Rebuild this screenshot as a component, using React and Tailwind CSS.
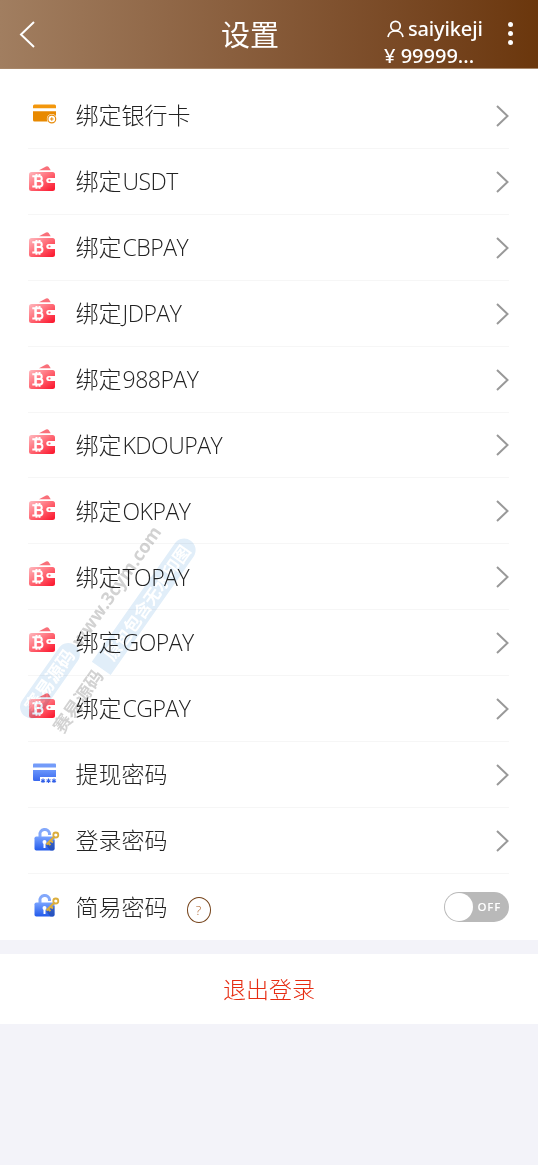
const FONT = 'font-["Open_Sans","Noto_Sans_CJK_SC",sans-serif]'

const items = [
  { label: "绑定银行卡", icon: "bank" },
  { label: "绑定", code: "USDT", icon: "wallet" },
  { label: "绑定", code: "CBPAY", icon: "wallet" },
  { label: "绑定", code: "JDPAY", icon: "wallet" },
  { label: "绑定", code: "988PAY", icon: "wallet" },
  { label: "绑定", code: "KDOUPAY", icon: "wallet" },
  { label: "绑定", code: "OKPAY", icon: "wallet" },
  { label: "绑定", code: "TOPAY", icon: "wallet" },
  { label: "绑定", code: "GOPAY", icon: "wallet" },
  { label: "绑定", code: "CGPAY", icon: "wallet" },
  { label: "提现密码", icon: "card" },
  { label: "登录密码", icon: "lock" },
  { label: "简易密码", icon: "lock", toggle: true },
]

function WalletIcon() {
  return (
    <svg width="28" height="28" viewBox="0 0 28 28" className="-mt-px -ml-1">
      <defs>
        <linearGradient id="wallet" x1="0" y1="0" x2="1" y2="1">
          <stop offset="0" stopColor="#ffb9bf" />
          <stop offset="0.5" stopColor="#ff6672" />
          <stop offset="1" stopColor="#fb1028" />
        </linearGradient>
      </defs>
      <path d="M11 5.200 18 1.500q1.600-.8 2.700.6l2 3.100z" fill="#f9707a" />
      <rect x="1" y="7" width="26" height="19" rx="2.500" fill="url(#wallet)" />
      <path d="M27 13h-6.200a2.500 2.500 0 0 0 0 5H27z" fill="#fff" />
      <circle cx="21.500" cy="15.500" r="1.100" fill="#ff5563" />
      <path d="M4.300 11.200h7a2.200 2.200 0 0 1 0 4.900H7.500h4.300a2.600 2.600 0 0 1 0 5.300H4.300M7.400 11v10.500M8.500 8.900V11m3-2.100V11M8.500 21.500v2.200m3-2.200v2.200" fill="none" stroke="#fff" strokeWidth="2" />
      <path d="M6.700 10.500h2v11.500h-2z" fill="#fff" />
    </svg>
  )
}

function BankIcon() {
  return (
    <svg width="26" height="22" viewBox="0 0 26 22" className="mt-px">
      <path d="M1 3q0-1.500 1.500-1.500h20Q24 1.500 24 3v2.300H1z" fill="#f3970c" />
      <path d="M1 8.300h23V18.500H2.500Q1 18.500 1 17z" fill="#e88900" />
      <circle cx="19.800" cy="16" r="5" fill="#fff" />
      <circle cx="19.800" cy="16" r="3.900" fill="none" stroke="#e88c0b" strokeWidth="1.200" />
      <path d="M18 16h3.600M19.800 14.200v3.600" stroke="#e88c0b" strokeWidth="1.100" />
    </svg>
  )
}

function CardIcon() {
  return (
    <svg width="26" height="24" viewBox="0 0 26 24" className="mt-[3px]">
      <defs>
        <linearGradient id="card" x1="0" y1="0" x2="0" y2="1">
          <stop offset="0" stopColor="#6995fb" />
          <stop offset="1" stopColor="#3a68ee" />
        </linearGradient>
      </defs>
      <path d="M1 2.500q0-1 1-1h21q1 0 1 1V5.500H1z" fill="#739bf9" />
      <path d="M1 8h23v7H8v4H2.500Q1 19 1 17.500z" fill="url(#card)" />
      <path d="M11 16.500v4.600m-2-3.500 4 2.400m0-2.400-4 2.400M16.500 16.500v4.600m-2-3.500 4 2.400m0-2.400-4 2.400M22 16.500v4.600m-2-3.500 4 2.400m0-2.400-4 2.400" stroke="#315fe8" strokeWidth="1.100" />
    </svg>
  )
}

function LockIcon() {
  return (
    <svg width="28" height="26" viewBox="0 0 28 26" className="mt-[3px]">
      <defs>
        <linearGradient id="lock" x1="0" y1="0" x2="0" y2="1">
          <stop offset="0" stopColor="#78a2ff" />
          <stop offset="1" stopColor="#225aeb" />
        </linearGradient>
      </defs>
      <path d="M8 11V8a4.800 4.800 0 0 1 9.500-1.500V8" fill="none" stroke="#83a8fb" strokeWidth="3" />
      <rect x="2.500" y="9.500" width="20" height="14" rx="1.800" fill="url(#lock)" />
      <path d="m22.500 13-8.500 5 4.500 5.500H21q1.500 0 1.500-2z" fill="#234cab" opacity=".7" />
      <circle cx="12.500" cy="15" r="2" fill="#fff" />
      <path d="M11.500 16h2v5h-2z" fill="#fff" />
      <path d="m22.500 9.500-8 8m1.500-1.500 2.500 2m0-4.500 2.500 2" stroke="#dcae3c" strokeWidth="2.200" fill="none" />
      <circle cx="23.800" cy="8" r="2.500" fill="none" stroke="#dcae3c" strokeWidth="1.800" />
    </svg>
  )
}

function ItemIcon({ name }) {
  if (name === "bank") return <BankIcon />
  if (name === "card") return <CardIcon />
  if (name === "lock") return <LockIcon />
  return <WalletIcon />
}

function Header() {
  return (
    <header className="flex h-[69px] items-center border-b border-[#a88769] bg-linear-to-r from-[#a17e60] to-[#6b370c] text-white">
      <div className="w-[221px] pl-[18px]">
        <svg width="18" height="28" viewBox="0 0 18 28" fill="none" stroke="#fff" strokeWidth="2">
          <path d="M16 2 3 14.500 16 27" />
        </svg>
      </div>
      <h1 className="mt-[2px] text-[29px] leading-9">设置</h1>
      <div className="ml-auto flex h-full items-start pr-[25px]">
        <div className='mt-[15px] w-[99px] font-["Noto_Sans"] text-xl leading-[27px] font-medium'>
          <div className="flex items-center gap-1 pl-[3px]">
            <svg width="17" height="18" viewBox="0 0 17 18" fill="none" stroke="#fff" strokeWidth="1.700" className="shrink-0">
              <circle cx="8.500" cy="6" r="4.700" />
              <path d="M1 17q1-6 7.500-6t7.500 6" />
            </svg>
            <span className="tracking-[-0.15px]">saiyikeji</span>
          </div>
          <div className="whitespace-nowrap">¥ 99999...</div>
        </div>
        <div className="mt-[22px] ml-[25px] flex flex-col gap-[4px]">
          <i className="size-[5px] rounded-full bg-white" />
          <i className="size-[5px] rounded-full bg-white" />
          <i className="size-[5px] rounded-full bg-white" />
        </div>
      </div>
    </header>
  )
}

function Row({ item }) {
  return (
    <div className="flex h-[65.920px] items-center border-b border-[#f6f6f6] last:border-0">
      <div className="flex w-12 items-center pb-1 pl-1">
        <ItemIcon name={item.icon} />
      </div>
      <span className="text-[23px] font-light text-[#222]">
        {item.label}
        {item.code && <span className="ml-px tracking-[-0.5px]">{item.code}</span>}
      </span>
      {item.toggle && (
        <span className="mt-[7px] ml-[19px] flex h-[26px] w-6 items-center justify-center rounded-[50%] border-[1.500px] border-[#744219] text-[13px] font-light text-[#a95c24]">?</span>
      )}
      {item.toggle ? (
        <div className="ml-auto flex h-[30px] w-[65px] items-center rounded-full bg-[#b9b9b9] pl-px">
          <span className="size-7 rounded-full bg-white" />
          <span className="ml-[5px] text-[11.500px] font-semibold tracking-[0.8px] text-white">OFF</span>
        </div>
      ) : (
        <svg width="13" height="22" viewBox="0 0 13 22" className="mt-px ml-auto" fill="none" stroke="#999" strokeWidth="2">
          <path d="m1 1 10.500 10L1 21" />
        </svg>
      )}
    </div>
  )
}

function Watermark() {
  return (
    <div className="pointer-events-none absolute top-[595px] left-[-14px] w-[250px] -rotate-[55deg] text-[18px] leading-[23px] font-bold whitespace-nowrap mix-blend-multiply">
      <div className="flex items-center">
        <span className="rounded-full bg-[#e1eef9] px-[7.500px] text-white">赛易源码</span>
        <span className="ml-px text-[#d2d2d2]">www.3cym.com</span>
      </div>
      <div className="mt-3 flex items-center pl-[7px]">
        <span className="text-[#d2d2d2]">赛易源码</span>
        <span className="ml-[4px] rounded-r-full bg-[#e1eef9] pr-2 pl-3 text-[17px] text-white">原包包含无水印图</span>
      </div>
    </div>
  )
}

export default function App() {
  return (
    <div className={`relative min-h-screen overflow-hidden bg-[#f3f3f9] ${FONT}`}>
      <Header />
      <main className="h-[871px] bg-white pt-[14px] pr-[29.500px] pl-[27.500px]">
        {items.map((item) => (
          <Row key={item.label + (item.code || "")} item={item} />
        ))}
      </main>
      <button className="mt-[14px] flex h-[70px] w-full items-center justify-center bg-white text-[23px] font-light text-[#e62c12]">
        退出登录
      </button>
      <Watermark />
    </div>
  )
}
